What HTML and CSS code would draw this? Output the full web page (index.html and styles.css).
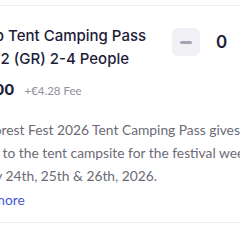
FILE: index.html
```html
<!DOCTYPE html>
<html>
<head>
<meta charset="utf-8">
<link rel="stylesheet" href="styles.css">
</head>
<body>
<div class="card">
  <div class="head">
    <div class="info">
      <div class="title">Group Tent Camping Pass Zone 2 (GR) 2-4 People</div>
      <div class="price"><span class="amount">€45.00</span><span class="fee">+€4.28 Fee</span></div>
    </div>
    <div class="qty">
      <button class="minus" aria-label="Decrease"><span class="dash"></span></button>
      <span class="count">0</span>
    </div>
  </div>
  <p class="desc">The Forest Fest 2026 Tent Camping Pass gives access to the tent campsite for the festival weekend on July 24th, 25th &amp; 26th, 2026.</p>
  <a class="more" href="#">Read more</a>
</div>
</body>
</html>
```

FILE: styles.css
```css
html, body {
  margin: 0;
  padding: 0;
  background: #ffffff;
  overflow: hidden;
}
body {
  width: 240px;
  height: 240px;
  font-family: Inter, "Noto Sans", sans-serif;
}
.card {
  margin-top: 5px;
  margin-left: -40px;
  border-top: 1px solid #ececf0;
  border-bottom: 1px solid #ececf0;
  padding: 18px 14px 0 0;
  height: 198px;
  box-sizing: content-box;
}
.head {
  display: flex;
  justify-content: space-between;
  align-items: flex-start;
}
.info {
  width: 200px;
}
.title {
  font-size: 15px;
  line-height: 23px;
  font-weight: 500;
  color: #1d1d3a;
}
.price {
  margin-top: 10px;
  display: flex;
  align-items: baseline;
  gap: 10px;
}
.amount {
  font-size: 15px;
  font-weight: 700;
  color: #1d1d3a;
}
.fee {
  font-family: Lato, "Noto Sans", sans-serif;
  font-size: 11.5px;
  color: #8f8f9a;
}
.qty {
  display: flex;
  align-items: center;
  gap: 16px;
  margin-top: 4px;
}
.minus {
  width: 28px;
  height: 28px;
  border: none;
  border-radius: 6px;
  background: #f0f0f5;
  display: flex;
  align-items: center;
  justify-content: center;
  padding: 0;
}
.dash {
  width: 12px;
  height: 3px;
  border-radius: 2px;
  background: #a4a4b2;
}
.count {
  font-size: 17px;
  font-weight: 600;
  color: #1d1d3a;
  width: 10px;
}
.desc {
  margin: 19px -50px 0 0;
  font-family: Lato, "Noto Sans", sans-serif;
  font-size: 13.8px;
  line-height: 23px;
  color: #6b6b76;
}
.more {
  display: block;
  margin-top: 1px;
  font-family: Lato, "Noto Sans", sans-serif;
  font-size: 13.8px;
  line-height: 23px;
  color: #4a56d6;
  text-decoration: none;
}
```
